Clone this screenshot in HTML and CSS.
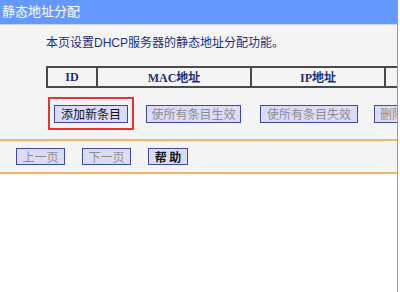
FILE: index.html
```html
<!DOCTYPE html>
<html lang="zh-CN">
<head>
  <meta charset="UTF-8">
  <title>静态地址分配</title>
  <link rel="stylesheet" href="styles.css">
</head>
<body>
  <div class="frame">
    <div class="title-bar">静态地址分配</div>

    <!-- 列表区域 -->
    <div class="content">
      <p class="desc">本页设置DHCP服务器的静态地址分配功能。</p>
      <table class="list">
        <tr>
          <th class="col-id">ID</th>
          <th class="col-mac">MAC地址</th>
          <th class="col-ip">IP地址</th>
          <th class="col-more"></th>
        </tr>
      </table>
      <div class="actions">
        <span class="mark"><button class="btn">添加新条目</button></span>
        <button class="btn off w-on">使所有条目生效</button>
        <button class="btn off w-off">使所有条目失效</button>
        <button class="btn off w-del">删除所有条目</button>
      </div>
    </div>

    <!-- 翻页 -->
    <div class="pager">
      <button class="btn off small">上一页</button>
      <button class="btn off small">下一页</button>
      <button class="btn help">帮 助</button>
    </div>
  </div>
</body>
</html>
```

FILE: styles.css
```css
/* General */
body {
  margin: 0;
  font-family: "Liberation Sans", "Noto Sans CJK SC", sans-serif;
  font-size: 12px;
  background: #fff;
}

.frame {
  width: 397px;
  min-height: 292px;
  border-right: 1px solid #9a9a9a;
  overflow: hidden;
}

.title-bar {
  height: 24px;
  line-height: 24px;
  padding-left: 2px;
  background: #6699ff;
  border-bottom: 1px solid #c8d8fb;
  color: #fff;
  font-size: 13px;
}

.content {
  background: #f4f4f4;
  padding: 10px 0 9px 46px;
}

.desc {
  margin: 0;
  line-height: 16px;
  color: #1b2f7a;
}

/* Table */
.list {
  margin-top: 15px;
  border-collapse: collapse;
  table-layout: fixed;
  width: 420px;
}

.list th {
  height: 16px;
  padding: 0;
  border: 2px solid #4a4a4a;
  color: #1b2f7a;
  font-family: "Liberation Serif", "Noto Sans CJK SC", serif;
  font-size: 12px;
  font-weight: bold;
}

.col-id { width: 48px; }
.col-mac { width: 152px; }
.col-ip { width: 132px; }

/* Buttons */
.actions {
  display: flex;
  align-items: center;
  margin: 9px 0 0 2px;
  white-space: nowrap;
}

.btn {
  height: 18px;
  padding: 0;
  background: #dcdcfa;
  border: 1px solid #3c4aa0;
  font-family: "Noto Sans CJK SC", sans-serif;
  font-size: 12px;
  line-height: 16px;
  color: #111;
  flex-shrink: 0;
}

.btn.off {
  color: #8c8c8c;
}

.mark {
  display: flex;
  align-items: center;
  width: 74px;
  height: 29px;
  padding: 0 4px;
  border: 2px solid #e53434;
}

.mark .btn { width: 74px; }
.w-on { width: 95px; margin-left: 12px; }
.w-off { width: 98px; margin-left: 19px; }
.w-del { width: 84px; margin-left: 16px; }

/* Pager */
.pager {
  display: flex;
  align-items: center;
  gap: 17px;
  height: 31px;
  padding-left: 16px;
  background: #f4f4f4;
  border-top: 2px solid #f2b36e;
  border-bottom: 2px solid #f2b36e;
}

.small { width: 49px; height: 17px; }

.help {
  width: 40px;
  height: 17px;
  font-weight: bold;
}
```
